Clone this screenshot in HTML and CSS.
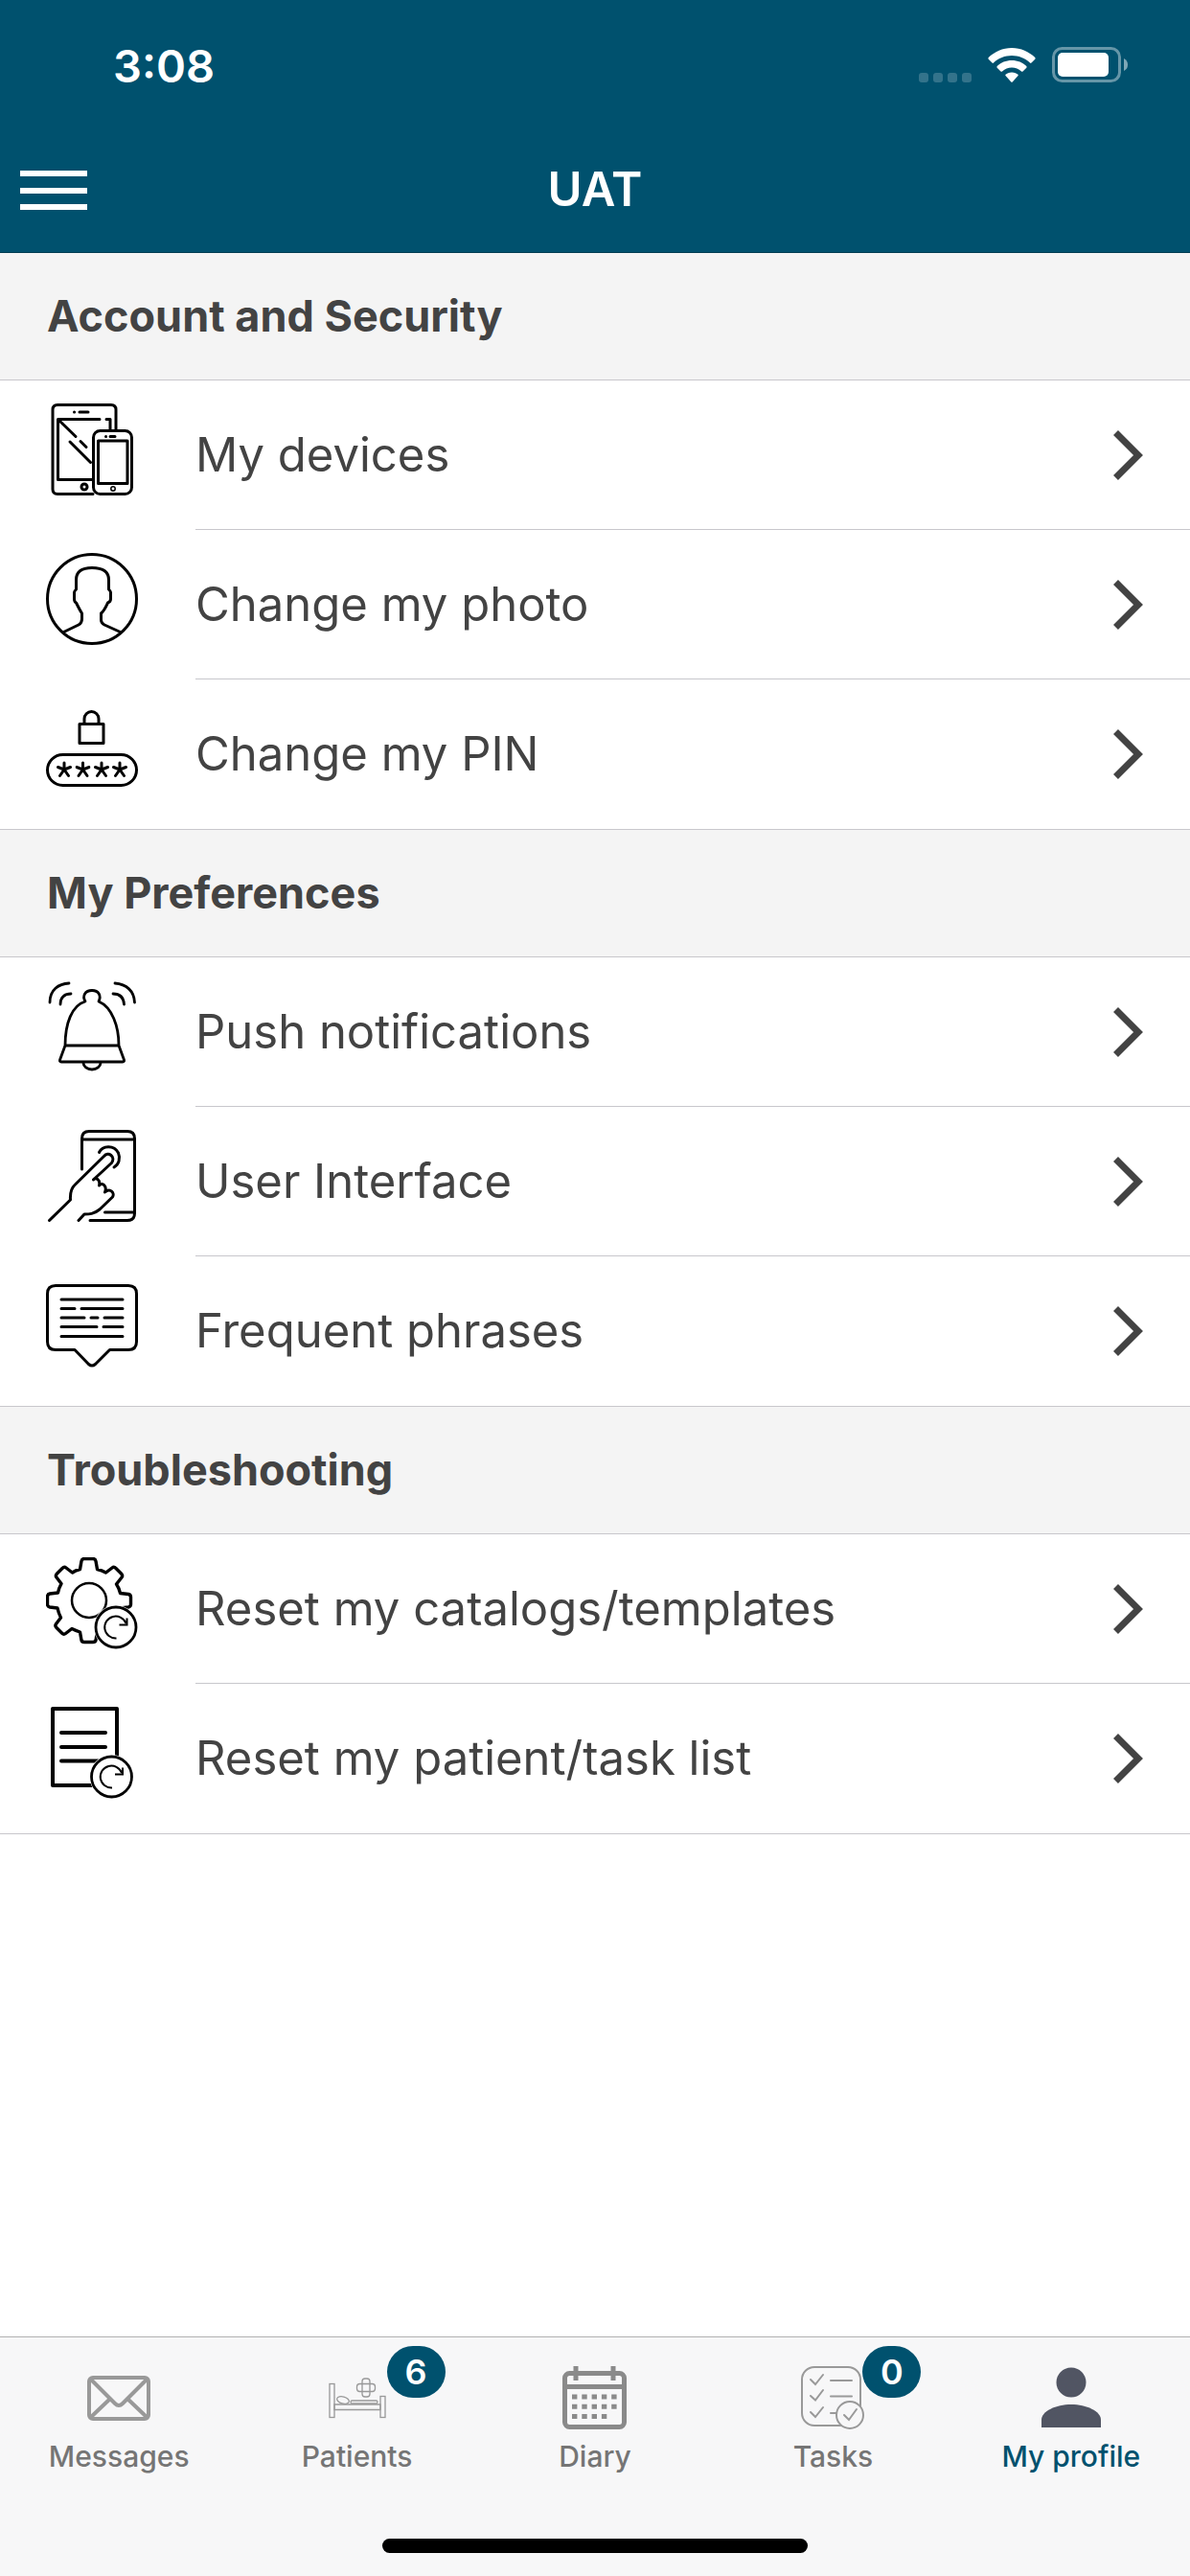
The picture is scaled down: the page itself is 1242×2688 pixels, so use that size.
FILE: index.html
```html
<!DOCTYPE html>
<html lang="en">
<head>
    <meta charset="utf-8">
    <meta name="viewport" content="width=device-width, initial-scale=1">
    <title>My profile</title>
    <link rel="stylesheet" href="styles.css">
</head>
<body>
    <header class="top">
        <div class="status-bar">
            <time class="clock">3:08</time>
            <div class="status-icons">
                <svg class="signal" viewBox="0 0 56 36" fill="#fff" fill-opacity="0.2">
                    <rect x="1" y="26" width="10" height="10" rx="3"/>
                    <rect x="16" y="26" width="10" height="10" rx="3"/>
                    <rect x="31" y="26" width="10" height="10" rx="3"/>
                    <rect x="46" y="26" width="10" height="10" rx="3"/>
                </svg>
                <svg class="wifi" viewBox="0 0 50 36" fill="#fff">
                    <path d="M25 0C34.500 0 43 4 49.300 10Q50 11 49.300 11.700L45.500 15.600Q44.700 16.300 44 15.600C39 10.700 32 8 25 8S11 10.700 6 15.600Q5.300 16.300 4.500 15.600L.700 11.700Q0 11 .700 10C7 4 15.500 0 25 0Z"/>
                    <path d="M25 13C31 13 36.500 15.300 40.300 19Q41 20 40.300 20.700L36.500 24.500Q35.700 25.200 35 24.500C32 22 29 20.500 25 20.500S18 22 15 24.500Q14.300 25.200 13.500 24.500L9.700 20.700Q9 20 9.700 19C13.500 15.300 19 13 25 13Z"/>
                    <path d="M25 25.500C28 25.500 30 26.500 31.500 27.800Q32 28.500 31.500 29L25.700 35.500Q25 36 24.300 35.500L18.500 29Q18 28.500 18.500 27.800C20 26.500 22 25.500 25 25.500Z"/>
                </svg>
                <svg class="battery" viewBox="0 0 80 38">
                    <rect x="1.500" y="1.500" width="69" height="34" rx="9" fill="none" stroke="#fff" stroke-opacity="0.4" stroke-width="3"/>
                    <rect x="6" y="6" width="53" height="25" rx="5" fill="#fff"/>
                    <path d="M75 12Q79 14 79 18.500T75 25Z" fill="#fff" fill-opacity="0.500"/>
                </svg>
            </div>
        </div>
        <div class="nav-bar">
            <button class="menu-button" type="button" aria-label="Menu">
                <svg viewBox="0 0 70 44" fill="#fff">
                    <rect y="2" width="70" height="6"/>
                    <rect y="20" width="70" height="6"/>
                    <rect y="37" width="70" height="6"/>
                </svg>
            </button>
            <h1 class="title">UAT</h1>
        </div>
    </header>

    <!-- shared shapes -->
    <svg class="defs" aria-hidden="true">
        <symbol id="chevron" viewBox="0 0 32 54">
            <path d="M2.500 3.500L26 27L2.500 50.500" fill="none" stroke="#434343" stroke-width="7"/>
        </symbol>
        <symbol id="star" viewBox="0 0 16 18">
            <path d="M8 9V2M8 9L1.500 6.500M8 9L14.500 6.500M8 9L3.500 15.500M8 9L12.500 15.500" fill="none" stroke="#000" stroke-width="3" stroke-linecap="round"/>
        </symbol>
        <symbol id="reload" viewBox="0 0 46 46">
            <circle cx="23" cy="23" r="23" fill="#fff"/>
            <circle cx="23" cy="23" r="21" fill="#fff" stroke="#000" stroke-width="2.800"/>
            <path d="M23.500 34.500A11.500 11.500 0 1 1 33.500 19M26.500 20.500H34.500V13.500" fill="none" stroke="#000" stroke-width="2"/>
        </symbol>
    </svg>

    <main class="settings">
        <section class="group">
            <h2 class="group-title">Account and Security</h2>
            <ul class="list">
                <li class="item">
                    <a class="row" href="#devices">
                        <svg class="icon" viewBox="0 0 96 96" fill="none" stroke="#000" stroke-width="3" stroke-linecap="round" stroke-linejoin="round">
                            <path d="M49 94.500H12Q7 94.500 7 89.500V6.500Q7 1.500 12 1.500H68Q73 1.500 73 6.500V27"/>
                            <path d="M48 79.500H12.500V16.500H56M63 16.500H67V27M13.500 17.500L31 34.500M36 39.500L42 45.500M25 40L46.500 61.500"/>
                            <path d="M29.500 9H29.600M35 9H44"/>
                            <circle cx="40" cy="87" r="3"/>
                            <rect x="49.500" y="28.500" width="40" height="66" rx="7"/>
                            <path d="M54.500 39H85V83.500H54.500ZM62.500 34.500H62.600M67 34.500H72"/>
                            <circle cx="70" cy="89" r="2.200" stroke-width="1.500"/>
                        </svg>
                        <span class="row-body">
                            <span class="label">My devices</span>
                            <svg class="chevron"><use href="#chevron"/></svg>
                        </span>
                    </a>
                </li>
                <li class="item">
                    <a class="row" href="#photo">
                        <svg class="icon" viewBox="0 0 96 96" fill="none" stroke="#000" stroke-width="3" stroke-linecap="round" stroke-linejoin="round">
                            <circle cx="48" cy="48" r="46.500"/>
                            <path d="M18.500 82.500L34 75Q37.500 73 37.500 69V63C35.500 60 33 55 31.500 52Q29.500 51 29.500 48V41Q29.500 40 31.500 38V28C31.500 19 38 15.500 48 15.500S65.500 19 65.500 28V38Q67.500 40 67.500 41V48Q67.500 51 64.500 52C63 55 61 60 57.500 63V70Q57.500 73 61 75L77.500 82.500"/>
                        </svg>
                        <span class="row-body">
                            <span class="label">Change my photo</span>
                            <svg class="chevron"><use href="#chevron"/></svg>
                        </span>
                    </a>
                </li>
                <li class="item">
                    <a class="row" href="#pin">
                        <svg class="icon" viewBox="0 0 96 96" fill="none" stroke="#000" stroke-width="3" stroke-linejoin="round">
                            <rect x="35" y="22.500" width="25" height="20"/>
                            <path d="M40 22V17A7.500 7.500 0 0 1 55 17V22"/>
                            <rect x="1.500" y="54.500" width="93" height="32" rx="16"/>
                            <use href="#star" x="11" y="61" width="16" height="18"/>
                            <use href="#star" x="30.500" y="61" width="16" height="18"/>
                            <use href="#star" x="50" y="61" width="16" height="18"/>
                            <use href="#star" x="69" y="61" width="16" height="18"/>
                        </svg>
                        <span class="row-body">
                            <span class="label">Change my PIN</span>
                            <svg class="chevron"><use href="#chevron"/></svg>
                        </span>
                    </a>
                </li>
            </ul>
        </section>

        <section class="group">
            <h2 class="group-title">My Preferences</h2>
            <ul class="list">
                <li class="item">
                    <a class="row" href="#push">
                        <svg class="icon" viewBox="0 0 96 96" fill="none" stroke="#000" stroke-width="2.800" stroke-linecap="round" stroke-linejoin="round">
                            <path d="M20 68C20 45 27 26 41 22C37.500 16 41 10.500 48 10.500S58 16 55 22C69 28 76 48 76 68ZM20 68L14.500 83Q14 85 16 85H80Q82 85 81.500 83L76 68"/>
                            <path d="M39 86A9 7 0 0 0 57 86M4 23C4 10 13 3.500 24 3M15 25C15 17 20 14 26 14M72 3C84 4 92 11 92.500 23M70 14C77 14 81 18 81.500 25"/>
                        </svg>
                        <span class="row-body">
                            <span class="label">Push notifications</span>
                            <svg class="chevron"><use href="#chevron"/></svg>
                        </span>
                    </a>
                </li>
                <li class="item">
                    <a class="row" href="#interface">
                        <svg class="icon" viewBox="0 0 96 96" fill="none" stroke="#000" stroke-width="3" stroke-linecap="round" stroke-linejoin="round">
                            <path d="M37.500 41V9Q37.500 1.500 45 1.500H85Q92.500 1.500 92.500 9V87Q92.500 94.500 85 94.500H46M38 10H92M61.500 86H92"/>
                            <path d="M3.500 94.500L25.500 73C25 66 26 61 30.500 57L60.500 27.500C65 22 73 28 68.500 34.500L49.500 52M49.500 52C52 49 57 52 55.500 58C59 54 64 59 61.500 65C67 60 72 66 69.500 70L56 83C50 88 45 88 40 88L34 94.500"/>
                            <path d="M55.500 23.500C59 16 71 15.500 75.500 24C78 30 76 36 71 39"/>
                        </svg>
                        <span class="row-body">
                            <span class="label">User Interface</span>
                            <svg class="chevron"><use href="#chevron"/></svg>
                        </span>
                    </a>
                </li>
                <li class="item">
                    <a class="row" href="#phrases">
                        <svg class="icon" viewBox="0 0 96 96" fill="none" stroke="#000" stroke-width="3" stroke-linecap="round" stroke-linejoin="round">
                            <path d="M10 6.500H86Q94.500 6.500 94.500 15V65Q94.500 73.500 86 73.500H66.500L51.500 88.500Q48 91.500 44.500 88.500L30 73.500H10Q1.500 73.500 1.500 65V15Q1.500 6.500 10 6.500Z"/>
                            <path d="M16 21H80M16 30.500H30M37 30.500H80M16 40H40M47 40H54M61 40H80M16 49.500H53M60 49.500H80M16 59.500H80"/>
                        </svg>
                        <span class="row-body">
                            <span class="label">Frequent phrases</span>
                            <svg class="chevron"><use href="#chevron"/></svg>
                        </span>
                    </a>
                </li>
            </ul>
        </section>

        <section class="group">
            <h2 class="group-title">Troubleshooting</h2>
            <ul class="list">
                <li class="item">
                    <a class="row" href="#reset-catalogs">
                        <svg class="icon" viewBox="0 0 96 96">
                            <path d="M37 4Q37.500 1.500 40 1.500H49Q51.500 1.500 52 4L53.500 12.500Q58 13.500 62.500 16L69 11Q71 9.500 73 11.500L78.500 17Q80.500 19 79 21L73.500 28Q76.500 32.500 77.500 37.500L86 38.500Q88.500 39 88.500 41.500V49Q88.500 51.500 86 52L77.500 53Q76 59 73 62.500L79 69Q80.500 71 78.500 73L73 79Q71 81 69 79.500L62.500 74.500Q58 77 53.500 78L52 86.500Q51.500 88.500 49 88.500H40Q37.500 88.500 37 86.500L35.500 78Q31 76.500 27 74.500L20.500 79.500Q18.500 81 16.500 79L11 73.500Q9 71.500 10.500 69.500L15.500 63Q13 58 12 53L4 52Q1.500 51.500 1.500 49V41Q1.500 38.500 4 38L12.500 37Q13.500 32 16 27.500L11 21Q9.500 19 11.500 17L17 11.500Q19 9.500 21 11L27.500 16Q31 13.500 35.500 12.500Z" fill="none" stroke="#000" stroke-width="3.400" stroke-linejoin="round"/>
                            <circle cx="45" cy="45" r="18" fill="none" stroke="#000" stroke-width="2.500"/>
                            <use href="#reload" x="50" y="50" width="46" height="46"/>
                        </svg>
                        <span class="row-body">
                            <span class="label">Reset my catalogs/templates</span>
                            <svg class="chevron"><use href="#chevron"/></svg>
                        </span>
                    </a>
                </li>
                <li class="item">
                    <a class="row" href="#reset-lists">
                        <svg class="icon" viewBox="0 0 96 96">
                            <path d="M7 2H74V82H7ZM16 27H62M16 42H62M16 56.500H62" fill="none" stroke="#000" stroke-width="4" stroke-linecap="round" stroke-linejoin="round"/>
                            <use href="#reload" x="45.500" y="50" width="46" height="46"/>
                        </svg>
                        <span class="row-body">
                            <span class="label">Reset my patient/task list</span>
                            <svg class="chevron"><use href="#chevron"/></svg>
                        </span>
                    </a>
                </li>
            </ul>
        </section>
    </main>

    <footer class="bottom">
        <nav class="tabs">
            <a class="tab" href="#messages">
                <span class="tab-icon">
                    <svg viewBox="0 0 72 72" fill="none" stroke="#999" stroke-width="4" stroke-linejoin="round">
                        <rect x="5" y="14" width="62" height="43" rx="4"/>
                        <path d="M6 15L32 41Q36 45 40 41L66 15M6 56L27 36M66 56L45 36"/>
                    </svg>
                </span>
                <span class="tab-label">Messages</span>
            </a>
            <a class="tab" href="#patients">
                <span class="tab-icon">
                    <svg viewBox="0 0 72 72" fill="none" stroke="#999" stroke-width="1.300">
                        <rect x="7" y="20.500" width="5" height="35"/>
                        <rect x="60" y="33.500" width="5" height="22"/>
                        <path d="M12 42H60V47.500H12Z"/>
                        <ellipse cx="21" cy="37.500" rx="6.500" ry="3.500" transform="rotate(15 21 37.500)"/>
                        <rect x="29" y="38" width="28" height="3" rx="1.500"/>
                        <rect x="41" y="15" width="8" height="19" rx="3"/>
                        <rect x="35.500" y="20.500" width="19" height="8" rx="3"/>
                    </svg>
                    <span class="badge">6</span>
                </span>
                <span class="tab-label">Patients</span>
            </a>
            <a class="tab" href="#diary">
                <span class="tab-icon">
                    <svg viewBox="0 0 72 72" fill="none" stroke="#8a8a8a" stroke-width="5">
                        <rect x="4.500" y="9.500" width="62" height="56" rx="5"/>
                        <path d="M5 23.500H67M16 2V17M55 2V17"/>
                        <path d="M12 34H60M12 44.300H60M12 54.600H50" stroke-dasharray="5.400 4.900"/>
                    </svg>
                </span>
                <span class="tab-label">Diary</span>
            </a>
            <a class="tab" href="#tasks">
                <span class="tab-icon">
                    <svg viewBox="0 0 72 72" fill="none" stroke="#999" stroke-width="2" stroke-linecap="round">
                        <rect x="4" y="3" width="61" height="61" rx="13"/>
                        <path d="M13 16L18 21L26 11M13 33L18 37.500L26 27M13 50L18 55L26 45M34 17H56M34 33.500H56M34 51H40"/>
                        <circle cx="54" cy="53" r="14" fill="#f7f7f8"/>
                        <path d="M48 53L53 58L61 47"/>
                    </svg>
                    <span class="badge">0</span>
                </span>
                <span class="tab-label">Tasks</span>
            </a>
            <a class="tab active" href="#profile">
                <span class="tab-icon">
                    <svg viewBox="0 0 72 72" fill="#515563">
                        <circle cx="36" cy="19" r="15.500"/>
                        <path d="M5 66V58C5 49 20 42 36 42S67 49 67 58V66Z"/>
                    </svg>
                </span>
                <span class="tab-label">My profile</span>
            </a>
        </nav>
        <div class="home-indicator"></div>
    </footer>
</body>
</html>
```
FILE: styles.css
```css
* {
    box-sizing: border-box;
}
body {
    margin: 0;
    min-height: 100vh;
    display: flex;
    flex-direction: column;
    background-color: #fff;
    color: #434343;
    font-family: Inter, "Liberation Sans", sans-serif;
}
h1, h2, ul {
    margin: 0;
    padding: 0;
}
a {
    color: inherit;
    text-decoration: none;
}
svg {
    display: block;
}
.defs {
    display: none;
}

/* Header */
.top {
    background-color: #00516e;
    border-bottom: 1px solid #003b50;
    color: #fff;
}
.status-bar {
    display: flex;
    justify-content: space-between;
    align-items: center;
    height: 132px;
    padding: 4px 64px 0 118px;
}
.clock {
    font-size: 47px;
    font-weight: 600;
}
.status-icons {
    display: flex;
    align-items: center;
    gap: 17px;
}
.signal {
    width: 56px;
    height: 36px;
}
.wifi {
    width: 50px;
    height: 36px;
}
.battery {
    width: 80px;
    height: 38px;
}
.nav-bar {
    display: grid;
    grid-template-columns: 1fr auto 1fr;
    align-items: center;
    height: 131px;
    padding: 0 21px;
}
.menu-button {
    width: 70px;
    height: 44px;
    padding: 0;
    border: none;
    background: none;
    cursor: pointer;
}
.title {
    font-size: 49px;
    font-weight: 600;
}

/* Settings list */
.settings {
    flex: 1;
}
.group {
    border-bottom: 1px solid #c8c7cc;
}
.group-title {
    height: 133px;
    padding: 0 49px;
    border-bottom: 1px solid #c8c7cc;
    background-color: #f4f4f4;
    font-size: 45px;
    font-weight: 700;
    line-height: 132px;
}
.list {
    list-style: none;
}
.row {
    display: flex;
    align-items: center;
    height: 156px;
    padding-left: 48px;
}
.icon {
    width: 96px;
    height: 96px;
    margin-right: 60px;
    margin-bottom: 12px;
}
.row-body {
    flex: 1;
    display: flex;
    align-items: center;
    justify-content: space-between;
    height: 156px;
    padding-right: 48px;
    border-bottom: 1px solid #c8c7cc;
}
.item:last-child .row-body {
    border-bottom-color: transparent;
}
.label {
    font-size: 49px;
}
.chevron {
    width: 32px;
    height: 54px;
}

/* Tab bar */
.bottom {
    border-top: 1px solid #b2b2b2;
    background-color: #f7f7f8;
}
.tabs {
    display: grid;
    grid-template-columns: repeat(5, 1fr);
    height: 210px;
    padding-top: 28px;
}
.tab {
    display: flex;
    flex-direction: column;
    align-items: center;
    gap: 4px;
    color: #757575;
}
.tab-icon {
    position: relative;
}
.tab-icon svg {
    width: 72px;
    height: 72px;
}
.tab-label {
    font-size: 30px;
    font-weight: 500;
    line-height: 40px;
}
.tab.active {
    color: #00516e;
}
.badge {
    position: absolute;
    top: -19px;
    left: 67px;
    min-width: 61px;
    height: 54px;
    border-radius: 27px;
    background-color: #00516e;
    color: #fff;
    font-size: 36px;
    font-weight: 600;
    line-height: 54px;
    text-align: center;
}
.home-indicator {
    width: 444px;
    max-width: 60%;
    height: 15px;
    margin: 0 auto 24px;
    border-radius: 8px;
    background-color: #000;
}
```
